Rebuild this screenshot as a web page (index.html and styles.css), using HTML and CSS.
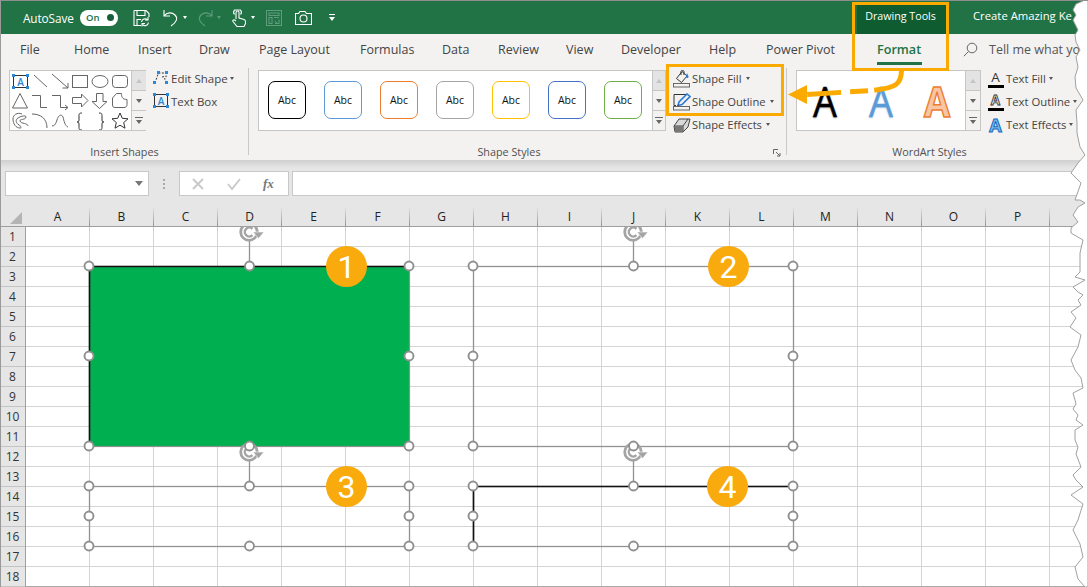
FILE: index.html
```html
<!DOCTYPE html>
<html lang="en">
<head>
<meta charset="utf-8">
<title>Excel Drawing Tools Format</title>
<link rel="stylesheet" href="styles.css">
</head>
<body>
<div class="window">
  <header class="titlebar">
    <span class="autosave">AutoSave</span>
    <span class="toggle"><span class="toggle-text">On</span><span class="toggle-dot"></span></span>
    <svg class="qat qat-save" width="17" height="18" viewBox="0 0 17 18"><path d="M1 1.500h12l3 3V8M8 16.500H1V1.500M4 1.500v5h8v-5M4 16.500v-6h4" class="qs"/><path d="M8.500 13a3.500 3.500 0 0 1 6-2M15.500 13.500a3.500 3.500 0 0 1-6 2" class="qs"/><path d="M15 8v3h-3M9 17.500v-3h3" class="qs"/></svg>
    <svg class="qat qat-undo" width="16" height="18" viewBox="0 0 16 18"><path d="M1 1v6h6M1 7c3-4 8-4 11-1 3 3 2 7-4 11" class="qs"/></svg>
    <span class="caret caret-w caret-undo"></span>
    <svg class="qat qat-redo" width="16" height="18" viewBox="0 0 16 18"><path d="M15 1v6H9M15 7c-3-4-8-4-11-1-3 3-2 7 4 11" class="qs dim"/></svg>
    <span class="caret caret-dim caret-redo"></span>
    <svg class="qat qat-touch" width="16" height="18" viewBox="0 0 16 18"><path d="M5 10V3.500a1.500 1.500 0 0 1 3 0V9l5 1.500c1 .4 1.500 1 1.500 2v2L13 17.500H6L2 12.500c-.6-1 .5-2 1.500-1.500L5 12" class="qs"/><path d="M3.500 5.500a3.500 3.500 0 0 1 0-4.500h6a3.500 3.500 0 0 1 0 4.500" class="qs"/></svg>
    <span class="caret caret-w caret-touch"></span>
    <svg class="qat qat-form" width="16" height="16" viewBox="0 0 16 16"><path d="M.5.5h15v15H.5zM3 3h10v2.500H3zM3 7.500h3v6H3zM8 7.500h5M9 13.500h4v-4M9 11l2 2.500" class="qs dim"/></svg>
    <svg class="qat qat-cam" width="17" height="14" viewBox="0 0 17 14"><path d="M.5 2.500h3L5 .5h5l1.500 2h5v11H.5z" class="qs"/><circle cx="8.500" cy="7.500" r="3.500" class="qs"/></svg>
    <svg class="qat qat-more" width="7" height="8" viewBox="0 0 7 8"><path d="M0 .5h6" class="qs"/><path d="M0 3h6L3 7z" fill="#fff"/></svg>
    <span class="title-spacer"></span>
    <span class="tools-tab">Drawing Tools</span>
    <span class="doc-title">Create Amazing Ke</span>
  </header>

  <nav class="tabs">
    <span class="tab">File</span>
    <span class="tab">Home</span>
    <span class="tab">Insert</span>
    <span class="tab">Draw</span>
    <span class="tab">Page Layout</span>
    <span class="tab">Formulas</span>
    <span class="tab">Data</span>
    <span class="tab">Review</span>
    <span class="tab">View</span>
    <span class="tab">Developer</span>
    <span class="tab">Help</span>
    <span class="tab">Power Pivot</span>
    <span class="tab tab-active">Format</span>
    <svg class="search" width="15" height="15" viewBox="0 0 15 15"><circle cx="9" cy="6" r="4.800" class="gs"/><path d="M5.500 9.500L.8 14.200" class="gs"/></svg>
    <span class="tab tab-tell">Tell me what yo</span>
  </nav>

  <section class="ribbon">
    <div class="group group-shapes">
      <div class="group-body">
        <div class="gallery gallery-shapes">
          <svg class="shapes" width="121" height="59" viewBox="10 71 121 59">
            <rect x="13.500" y="75.500" width="14" height="12" class="gs dark"/>
            <text x="20.500" y="85.500" class="mini-a">A</text>
            <path d="M12 74h3v3h-3zM26 74h3v3h-3zM12 86h3v3h-3zM26 86h3v3h-3z" class="handle-blue"/>
            <path d="M34 75l13 12" class="gs"/>
            <path d="M52 74l16 14M62.500 88H68v-5" class="gs"/>
            <rect x="72.500" y="75.500" width="15" height="12" class="gs"/>
            <ellipse cx="100" cy="81.500" rx="8" ry="6" class="gs"/>
            <rect x="112.500" y="75.500" width="15" height="12" rx="3" class="gs"/>
            <path d="M20 93.500l-7.500 14.500h15z" class="gs"/>
            <path d="M32 95.500h8.500v12H47" class="gs"/>
            <path d="M52 95.500h8.500v12h7M65 105l3 2.500-3 2.500" class="gs"/>
            <path d="M72.500 97.500h9v-3.500l6.500 6.500-6.500 6.500v-3.500h-9z" class="gs"/>
            <path d="M96.500 93.500h6.500v8h4l-7.500 7-7.500-7h4.500z" class="gs"/>
            <path d="M112.500 98l4-4.500h5c0 3 .5 6 5.500 6v5c0 2-1 3-3 3h-9c-1.500 0-2.500-1-2.500-2.500z" class="gs"/>
            <path d="M22 114c-5-2-9 1-9 5 0 5 3 9 7 9 2 0 1-2-1-3-3-2-4-5-1-7 3-2 8-3 8-1 0 3-7 2-6 4 1 3 8 2 8 5" class="gs"/>
            <path d="M32 114c8 0 15 4 15 14" class="gs"/>
            <path d="M52 126c3 0 4-3 5-6 1-4 4-7 6-3 1 4 2 9 5 10" class="gs"/>
            <path d="M82 113c-3 0-3 1-3 3v4c0 2-1 2-2 2 1 0 2 0 2 2v3c0 2 0 3 3 3" class="gs dark"/>
            <path d="M99 113c3 0 3 1 3 3v4c0 2 1 2 2 2-1 0-2 0-2 2v3c0 2 0 3-3 3" class="gs dark"/>
            <path d="M120 113l2.300 5.300 5.700.5-4.300 3.800 1.300 5.600-5-3-5 3 1.300-5.600-4.300-3.800 5.700-.5z" class="gs dark"/>
          </svg>
          <div class="scroll scroll-wide">
            <span class="scroll-cell scroll-up"><span class="tri-up"></span></span>
            <span class="scroll-cell"><span class="tri-down"></span></span>
            <span class="scroll-cell scroll-more"><span class="tri-more"></span></span>
          </div>
        </div>
        <div class="btn-col">
          <div class="btn btn-compact">
            <svg width="16" height="16" viewBox="0 0 16 16"><path d="M2 13l3.500-10h8M9 7l4.500-1-2 3 2 3" class="dash"/><path d="M4 1h3v3H4zM12 1h3v3h-3zM0 11h3v3H0zM12 11h3v3h-3z" class="handle-blue"/></svg>
            <span>Edit Shape</span><span class="caret"></span>
          </div>
          <div class="btn btn-compact">
            <svg width="16" height="16" viewBox="0 0 16 16"><rect x="1.500" y="1.500" width="13" height="12" class="gs dark"/><text x="8" y="11.500" class="mini-a">A</text><path d="M0 0h3v3H0zM13 0h3v3h-3zM0 12h3v3H0zM13 12h3v3h-3z" class="handle-blue"/></svg>
            <span>Text Box</span>
          </div>
        </div>
      </div>
      <div class="group-label">Insert Shapes</div>
    </div>
    <div class="sep"></div>

    <div class="group group-styles">
      <div class="group-body">
        <div class="gallery gallery-styles">
          <div class="tiles">
            <span class="tile tile-black">Abc</span>
            <span class="tile tile-blue">Abc</span>
            <span class="tile tile-orange">Abc</span>
            <span class="tile tile-gray">Abc</span>
            <span class="tile tile-gold">Abc</span>
            <span class="tile tile-navy">Abc</span>
            <span class="tile tile-green">Abc</span>
          </div>
          <div class="scroll">
            <span class="scroll-cell scroll-up"><span class="tri-up"></span></span>
            <span class="scroll-cell"><span class="tri-down"></span></span>
            <span class="scroll-cell scroll-more"><span class="tri-more"></span></span>
          </div>
        </div>
        <div class="btn-col">
          <div class="btn">
            <svg width="18" height="18" viewBox="0 0 18 18"><path d="M9 1.500L3.500 8.500l5 4 5.500-6.500z" class="gs dark"/><path d="M8 5V1.500c0-1.500 3-1.500 3 0V5" class="gs dark"/><path d="M14 3l1.500 3.500c0 2-2.500 2-2.500 0z" fill="#2b7cd3"/><rect x=".5" y="13.500" width="16" height="3.500" class="gs"/></svg>
            <span>Shape Fill</span><span class="caret"></span>
          </div>
          <div class="btn">
            <svg width="18" height="18" viewBox="0 0 18 18"><path d="M14 1.500H1v11h2" class="gs dark"/><path d="M5 12.500l1-3.500 8-8 3 2.500-8 8z" fill="none" stroke="#2b7cd3" stroke-width="1.600"/><path d="M4 13l1-1.500 1 1z" fill="#333"/><rect x=".5" y="13.500" width="16" height="3.500" class="gs"/></svg>
            <span>Shape Outline</span><span class="caret"></span>
          </div>
          <div class="btn">
            <svg width="18" height="18" viewBox="0 0 18 18"><path d="M1 10L6 3h11l-2 8-5 5H2z" fill="#d9d9d9" stroke="#444"/><path d="M1 10h9l5-7M10 10v6" fill="none" stroke="#444"/><path d="M2 10h8v6H2z" fill="#777"/></svg>
            <span>Shape Effects</span><span class="caret"></span>
          </div>
        </div>
      </div>
      <div class="group-label">Shape Styles
        <svg class="launcher" width="8" height="8" viewBox="0 0 8 8"><path d="M.5 5V.5H5" class="gs"/><path d="M3 3l4 4M7 4v3H4" class="gs"/></svg>
      </div>
    </div>
    <div class="sep"></div>

    <div class="group group-wordart">
      <div class="group-body">
        <div class="gallery gallery-wordart">
          <div class="wa-list">
            <span class="wa wa-black">A</span>
            <span class="wa wa-blue">A</span>
            <span class="wa wa-orange">A</span>
          </div>
          <div class="scroll scroll-wide">
            <span class="scroll-cell scroll-up"><span class="tri-up"></span></span>
            <span class="scroll-cell"><span class="tri-down"></span></span>
            <span class="scroll-cell scroll-more"><span class="tri-more"></span></span>
          </div>
        </div>
        <div class="btn-col">
          <div class="btn btn-text">
            <span class="text-icon"><span class="ti-a">A</span><span class="ti-bar"></span></span>
            <span>Text Fill</span><span class="caret"></span>
          </div>
          <div class="btn btn-text">
            <span class="text-icon"><span class="ti-a ti-outline">A</span><span class="ti-bar"></span></span>
            <span>Text Outline</span><span class="caret"></span>
          </div>
          <div class="btn btn-text">
            <span class="text-icon"><span class="ti-a ti-effect">A</span></span>
            <span>Text Effects</span><span class="caret"></span>
          </div>
        </div>
      </div>
      <div class="group-label">WordArt Styles</div>
    </div>
  </section>

  <section class="formula">
    <div class="namebox"><span class="caret caret-big"></span></div>
    <div class="grip"></div>
    <div class="fx-box">
      <svg width="14" height="14" viewBox="0 0 14 14"><path d="M2 2l10 10M12 2L2 12" class="fx-mark"/></svg>
      <svg width="16" height="14" viewBox="0 0 16 14"><path d="M2 7l4 5 8-10" class="fx-mark"/></svg>
      <span class="fx">fx</span>
    </div>
    <div class="fx-input"></div>
  </section>

  <section class="sheet">
    <div class="col-head">
      <div class="corner"><span class="corner-tri"></span></div>
      <span class="col">A</span><span class="col">B</span><span class="col">C</span><span class="col">D</span>
      <span class="col">E</span><span class="col">F</span><span class="col">G</span><span class="col">H</span>
      <span class="col">I</span><span class="col">J</span><span class="col">K</span><span class="col">L</span>
      <span class="col">M</span><span class="col">N</span><span class="col">O</span><span class="col">P</span>
      <span class="col"></span>
    </div>
    <div class="sheet-main">
      <div class="row-head">
        <span class="row">1</span><span class="row">2</span><span class="row">3</span><span class="row">4</span><span class="row">5</span><span class="row">6</span>
        <span class="row">7</span><span class="row">8</span><span class="row">9</span><span class="row">10</span><span class="row">11</span><span class="row">12</span>
        <span class="row">13</span><span class="row">14</span><span class="row">15</span><span class="row">16</span><span class="row">17</span><span class="row">18</span>
      </div>
      <div class="cells">
        <svg class="canvas" width="1062" height="360" viewBox="26 227 1062 360">
          <defs>
            <g id="rot">
              <circle r="8.300" class="rot-ring"/>
              <path d="M3.500-3.200a4.500 4.500 0 1 0 0 6.400" class="rot-inner"/>
              <path d="M4 0h11l-5.500 6.500z" class="rot-arrow"/>
            </g>
          </defs>
          <rect x="89.500" y="266.500" width="320" height="180" class="green"/>
          <path d="M89.500 446.500V266.500H409.500" class="black-line"/>
          <rect x="473.500" y="266.500" width="320" height="180" class="sel"/>
          <rect x="89.500" y="486.500" width="320" height="60" class="sel"/>
          <rect x="473.500" y="486.500" width="320" height="60" class="sel"/>
          <path d="M473.500 546.500V486.500H793.500" class="black-line"/>

          <path d="M249.500 240V266M633.500 240V266M249.500 460V486M633.500 460V486" class="sel"/>
          <use href="#rot" x="249" y="232"/>
          <use href="#rot" x="633" y="232"/>
          <use href="#rot" x="249" y="452"/>
          <use href="#rot" x="633" y="452"/>

          <g class="handles">
            <circle cx="89" cy="266" r="4.500"/><circle cx="249.500" cy="266" r="4.500"/><circle cx="409" cy="266" r="4.500"/>
            <circle cx="89" cy="356" r="4.500"/><circle cx="409" cy="356" r="4.500"/>
            <circle cx="89" cy="446" r="4.500"/><circle cx="249.500" cy="446" r="4.500"/><circle cx="409" cy="446" r="4.500"/>
            <circle cx="473" cy="266" r="4.500"/><circle cx="633.500" cy="266" r="4.500"/><circle cx="793" cy="266" r="4.500"/>
            <circle cx="473" cy="356" r="4.500"/><circle cx="793" cy="356" r="4.500"/>
            <circle cx="473" cy="446" r="4.500"/><circle cx="633.500" cy="446" r="4.500"/><circle cx="793" cy="446" r="4.500"/>
            <circle cx="89" cy="486" r="4.500"/><circle cx="249.500" cy="486" r="4.500"/><circle cx="409" cy="486" r="4.500"/>
            <circle cx="89" cy="516" r="4.500"/><circle cx="409" cy="516" r="4.500"/>
            <circle cx="89" cy="546" r="4.500"/><circle cx="249.500" cy="546" r="4.500"/><circle cx="409" cy="546" r="4.500"/>
            <circle cx="473" cy="486" r="4.500"/><circle cx="633.500" cy="486" r="4.500"/><circle cx="793" cy="486" r="4.500"/>
            <circle cx="473" cy="516" r="4.500"/><circle cx="793" cy="516" r="4.500"/>
            <circle cx="473" cy="546" r="4.500"/><circle cx="633.500" cy="546" r="4.500"/><circle cx="793" cy="546" r="4.500"/>
          </g>

          <circle cx="346.500" cy="266.500" r="20.500" class="badge"/><text x="346.500" y="278" class="badge-num">1</text>
          <circle cx="728.500" cy="266.500" r="20.500" class="badge"/><text x="728.500" y="278" class="badge-num">2</text>
          <circle cx="346.500" cy="486.500" r="20.500" class="badge"/><text x="346.500" y="498" class="badge-num">3</text>
          <circle cx="727.500" cy="486.500" r="20.500" class="badge"/><text x="727.500" y="498" class="badge-num">4</text>
        </svg>
      </div>
    </div>
  </section>

  <div class="callout callout-format"></div>
  <div class="callout callout-shape"></div>
  <svg class="arrow" width="1088" height="587" viewBox="0 0 1088 587">
    <path d="M901.500 71C901 85 895 88 872 90.500L806 94.500" class="arrow-line"/>
    <path d="M788 94.500L807 85v19z" class="arrow-head"/>
    <path d="M1075 0L1083 1 1076 4 1073 10 1076 15 1073 20 1078 30 1075 35 1076 42 1080 50 1076 57 1078 67 1075 77 1076 88 1083 100 1076 110 1077 123 1077 133 1080 147 1085 155 1078 163 1071 173 1081 183 1075 200 1080 200 1085 203 1078 207 1073 215 1078 222 1071 228 1071 233 1083 240 1080 253 1080 272 1075 277 1085 280 1073 287 1078 292 1083 295 1078 300 1081 305 1071 312 1076 318 1070 327 1081 335 1078 347 1071 360 1075 370 1081 378 1083 388 1073 393 1075 400 1076 404 1073 409 1078 415 1076 420 1083 425 1075 430 1075 440 1078 447 1076 454 1081 467 1073 475 1076 480 1083 487 1071 495 1083 504 1078 520 1073 530 1080 544 1083 557 1075 567 1078 579 1085 587H1088V0z" class="torn"/>
  </svg>
</div>
</body>
</html>
```

FILE: styles.css
```css
* { box-sizing: border-box; }
html, body { margin: 0; padding: 0; background: #fff; }
body { font-family: "Open Sans", "Noto Sans", "Liberation Sans", sans-serif; color: #444; }

.window {
  position: relative;
  width: 1088px;
  height: 587px;
  overflow: hidden;
  display: flex;
  flex-direction: column;
  border-top: 1px solid #8e8e8e;
  border-left: 1px solid #9a9a9a;
  background: #fff;
}

/* title bar */
.titlebar {
  height: 33px;
  flex: none;
  display: flex;
  align-items: center;
  background: #217346;
  color: #fff;
  padding-left: 22px;
  font-size: 11.5px;
}
.autosave { width: 57px; font-size: 11.8px; letter-spacing: -.1px; }
.toggle {
  width: 38px; height: 16px; border-radius: 8px; background: #fff;
  display: flex; align-items: center; justify-content: space-between; padding: 0 4px 0 6px;
}
.toggle-text { color: #217346; font-size: 9.500px; font-weight: 600; }
.toggle-dot { width: 7px; height: 7px; border-radius: 50%; background: #17603a; }
.qat { flex: none; }
.qs { fill: none; stroke: #fff; stroke-width: 1.100; }
.qs.dim { stroke: #5f9c7c; }
.qat-save { margin-left: 15px; }
.qat-undo { margin-left: 13px; }
.caret-undo { margin-left: 4px; }
.qat-redo { margin-left: 10px; }
.caret-redo { margin-left: 4px; }
.qat-touch { margin-left: 10px; }
.caret-touch { margin-left: 4px; }
.qat-form { margin-left: 11px; }
.qat-cam { margin-left: 13px; }
.qat-more { margin-left: 17px; }
.title-spacer { flex: 1; }
.tools-tab {
  width: 91px; align-self: stretch; margin-top: 3px;
  background: #0e5c2f; display: flex; align-items: center; justify-content: center;
  font-size: 10.700px; padding: 0 4px 7px 0;
}
.doc-title { width: 115px; margin-left: 25px; flex: none; white-space: nowrap; font-size: 11.300px; padding-bottom: 5px; }

.caret {
  width: 0; height: 0; flex: none; display: inline-block;
  border-left: 2.500px solid transparent; border-right: 2.500px solid transparent;
  border-top: 3px solid #555;
}
.caret-w { border-top-color: #fff; }
.caret-dim { border-top-color: #5f9c7c; }
.caret-big { border-left-width: 4px; border-right-width: 4px; border-top-width: 5px; border-top-color: #777; }

/* tabs */
.tabs {
  height: 31px;
  flex: none;
  background: #f3f2f1;
  display: grid;
  grid-template-columns: 54px 64px 61px 60px 101px 82px 56px 68px 55px 88px 57px 111px 86px 26px 1fr;
  align-items: center;
  padding-left: 19px;
  font-size: 12.500px;
  color: #444;
  white-space: nowrap;
}
.tab { display: block; }
.tab-active {
  position: relative; color: #217346; font-weight: 600; font-size: 12.600px; padding-bottom: 1px;
}
.tab-active::after {
  content: ""; position: absolute; left: 0; top: 21px; width: 45px; height: 3px; background: #217346;
}
.search { justify-self: start; }
.gs { fill: none; stroke: #666; stroke-width: 1; }
.gs.dark { stroke: #333; }
.tab-tell { color: #555; }

/* ribbon */
.ribbon {
  height: 95px;
  flex: none;
  display: flex;
  background: #f3f2f1;
}
.group { display: flex; flex-direction: column; position: relative; flex: none; }
.group-body { flex: 1; display: flex; padding-top: 5px; min-height: 0; }
.group-label { height: 16px; line-height: 16px; text-align: center; font-size: 10.800px; color: #505050; position: relative; }
.sep { width: 1px; flex: none; margin: 3px 0 5px; background: #c8c8c8; }
.group-shapes { width: 247px; padding-left: 8px; }
.group-styles { width: 537px; padding-left: 9px; }
.group-wordart { flex: 1; padding-left: 9px; }
.group-shapes .group-label { padding-right: 8px; }
.group-styles .group-label { padding-right: 26px; }
.group-wordart .group-label { padding-right: 25px; }
.launcher { position: absolute; right: 5px; top: 5px; }

.gallery {
  display: flex; height: 61px; flex: none; background: #fff;
  border: 1px solid #c6c6c6;
}
.gallery-shapes { width: 137px; }
.gallery-styles { width: 408px; }
.gallery-wordart { width: 185px; }
.shapes { flex: none; }
.scroll { margin-left: auto; width: 13px; flex: none; display: flex; flex-direction: column; border-left: 1px solid #c6c6c6; background: #f3f2f1; }
.scroll-wide { width: 15px; }
.scroll-cell { flex: 1; display: flex; align-items: center; justify-content: center; border-bottom: 1px solid #c6c6c6; }
.scroll-cell:last-child { border-bottom: 0; }
.scroll-up { background: #e3e3e3; }
.tri-up { border-left: 3.500px solid transparent; border-right: 3.500px solid transparent; border-bottom: 4px solid #c4c4c4; }
.tri-down { border-left: 3.500px solid transparent; border-right: 3.500px solid transparent; border-top: 4px solid #666; }
.tri-more { position: relative; border-left: 3.500px solid transparent; border-right: 3.500px solid transparent; border-top: 4px solid #666; margin-top: 3px; }
.tri-more::before { content: ""; position: absolute; left: -4px; top: -7px; width: 8px; height: 1px; background: #666; }

.tiles { display: flex; gap: 18px; padding: 10px 0 0 9px; }
.tile {
  width: 38px; height: 38px; border-radius: 7px; border: 1.300px solid #000;
  display: flex; align-items: center; justify-content: center;
  font-size: 10.500px; color: #111; flex: none;
}
.tile-blue { border-color: #5b9bd5; }
.tile-orange { border-color: #ed7d31; }
.tile-gray { border-color: #a5a5a5; }
.tile-gold { border-color: #ffc000; }
.tile-navy { border-color: #4472c4; }
.tile-green { border-color: #70ad47; }

.wa-list { display: flex; }
.wa {
  width: 56px; height: 59px; display: flex; align-items: center; justify-content: center;
  font-family: "Open Sans", "Liberation Sans", sans-serif; font-size: 42px; line-height: 1; flex: none;
  transform: scaleX(.9);
}
.wa-black { color: #000; font-weight: 400; -webkit-text-stroke: .5px #000; text-shadow: 0 1px 2px rgba(0,0,0,.4); }
.wa-blue { color: #5b9bd5; font-weight: 400; -webkit-text-stroke: .5px #5b9bd5; text-shadow: 0 1px 2px rgba(91,155,213,.5); }
.wa-orange { color: #f8c6a2; font-weight: 700; -webkit-text-stroke: 1.500px #ed7d31; }

.btn-col { margin-left: 7px; margin-top: -3px; display: flex; flex-direction: column; flex: none; }
.group-wordart .btn-col { margin-left: 6px; }
.btn { height: 23px; display: flex; align-items: center; gap: 1px; font-size: 11.200px; color: #444; white-space: nowrap; }
.btn .caret { margin-left: 3px; }
.btn-text { font-size: 11.300px; gap: 2px; }
.btn-text .caret { margin-left: 1px; }
.btn-compact { gap: 2px; font-size: 11.500px; padding-bottom: 1px; }
.btn-compact .caret { margin-left: 0; }
.btn svg { flex: none; }
.text-icon { width: 17px; height: 18px; display: flex; flex-direction: column; align-items: center; position: relative; flex: none; }
.ti-a { font-size: 13.500px; line-height: 14px; color: #333; }
.ti-bar { width: 16px; height: 3.500px; background: #000; margin-top: 1px; }
.ti-outline { color: #ddd; -webkit-text-stroke: .8px #333; font-weight: 700; }
.ti-effect { font-size: 18px; line-height: 18px; font-weight: 700; color: #7db8ec; -webkit-text-stroke: 1px #0f6cbd; }
.mini-a { font-size: 10px; font-weight: 600; fill: #2b88d8; text-anchor: middle; font-family: "Open Sans", sans-serif; }
.handle-blue { fill: #2b88d8; }
.dash { fill: none; stroke: #333; stroke-dasharray: 2 1.500; }

/* formula bar */
.formula {
  height: 47px;
  flex: none;
  display: flex;
  padding: 11px 0 0 4px;
  background: linear-gradient(#cfcfcf 0, #e6e6e6 8px);
  align-items: flex-start;
}
.namebox {
  width: 144px; height: 25px; background: #fff; border: 1px solid #c8c8c8;
  display: flex; align-items: center; justify-content: flex-end; padding-right: 5px;
}
.grip { width: 30px; height: 25px; position: relative; }
.grip::after {
  content: ""; position: absolute; left: 14px; top: 8px; width: 2px; height: 10px;
  background: repeating-linear-gradient(#aaa 0 2px, transparent 2px 4px);
}
.fx-box {
  width: 110px; height: 25px; background: #fff; border: 1px solid #c8c8c8;
  display: flex; align-items: center; gap: 21px; padding-left: 11px;
}
.fx-mark { fill: none; stroke: #c8c8c8; stroke-width: 1.800; }
.fx { font-family: "Liberation Serif", serif; font-style: italic; font-weight: 700; font-size: 13px; color: #777; }
.fx-input { flex: 1; height: 25px; margin-left: 3px; background: #fff; border: 1px solid #c8c8c8; }

/* sheet */
.sheet { flex: 1; display: flex; flex-direction: column; min-height: 0; }
.col-head {
  height: 20px; flex: none; display: flex; background: #e6e6e6;
  border-bottom: 1px solid #9e9e9e; font-size: 12px; color: #222;
}
.corner { width: 25px; flex: none; position: relative; }
.corner-tri {
  position: absolute; left: 9px; bottom: 2px; width: 0; height: 0;
  border-left: 12px solid transparent; border-bottom: 12px solid #b4b4b4;
}
.col {
  width: 64px; flex: none; text-align: center; line-height: 19px;
  border-right: 1px solid #999;
  border-image: linear-gradient(#e6e6e6, #8f8f8f) 1;
}
.sheet-main { flex: 1; display: flex; min-height: 0; border-bottom: 1px solid #a8a8a8; }
.row-head { width: 25px; flex: none; background: #e6e6e6; border-right: 1px solid #9e9e9e; display: flex; flex-direction: column; }
.row {
  height: 20px; flex: none; text-align: center; line-height: 20px; font-size: 12px; color: #333;
  border-bottom: 1px solid #c4c4c4; padding-right: 1px;
}
.cells {
  flex: 1; position: relative; min-width: 0;
  background-color: #fff;
  background-image:
    linear-gradient(to left, #d4d4d4 1px, transparent 1px),
    linear-gradient(to top, #d4d4d4 1px, transparent 1px);
  background-size: 64px 20px;
}
.canvas { position: absolute; left: 0; top: 0; }
.green { fill: #00b050; stroke: #8f8f8f; stroke-width: 1.200; }
.sel { fill: none; stroke: #929292; stroke-width: 1.300; }
.black-line { fill: none; stroke: #111; stroke-width: 1.600; }
.handles circle { fill: #fff; stroke: #8f8f8f; stroke-width: 1.900; }
.rot-ring { fill: #fff; stroke: #a4a4a4; stroke-width: 2.800; }
.rot-inner { fill: none; stroke: #a4a4a4; stroke-width: 2.400; }
.rot-arrow { fill: #a4a4a4; stroke: #fff; stroke-width: .6; }
.badge { fill: #f9ab0d; }
.badge-num { fill: #fff; font-family: Roboto, "Open Sans", sans-serif; font-size: 32px; text-anchor: middle; }

/* annotations */
.callout { position: absolute; border: 3px solid #fbab00; }
.callout-format { left: 851px; top: 1px; width: 97px; height: 69px; }
.callout-shape { left: 665px; top: 63px; width: 118px; height: 52px; }
.arrow { position: absolute; left: -1px; top: -1px; }
.arrow-line { fill: none; stroke: #fbab00; stroke-width: 5; stroke-dasharray: 38 6 18 9 34 9; }
.arrow-head { fill: #fbab00; }
.torn { fill: #fff; stroke: #a0a0a0; stroke-width: 1; }
```
